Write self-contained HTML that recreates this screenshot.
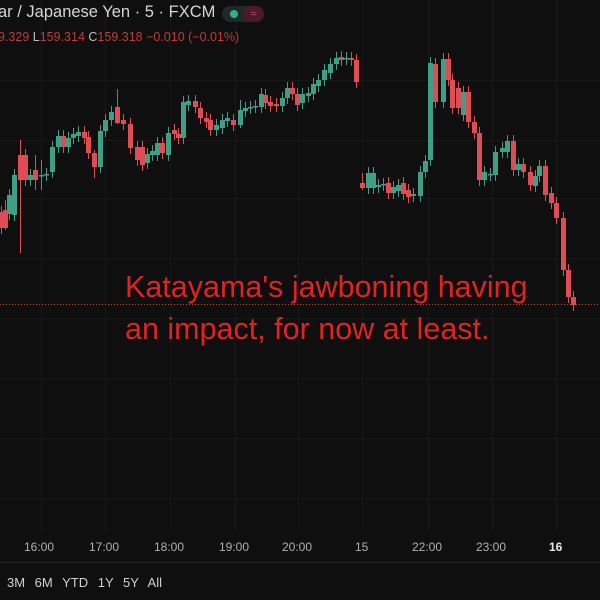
<!DOCTYPE html>
<html><head><meta charset="utf-8"><style>
html,body{margin:0;padding:0;background:#0f0f0f;width:600px;height:600px;overflow:hidden;font-family:"Liberation Sans",sans-serif}
.t{position:absolute;white-space:nowrap}
</style></head><body>
<svg id="c" width="600" height="600" style="position:absolute;left:0;top:0">
<g stroke="#181818" stroke-width="1">
<line x1="0" y1="80.5" x2="600" y2="80.5"/><line x1="0" y1="140.5" x2="600" y2="140.5"/><line x1="0" y1="198.5" x2="600" y2="198.5"/><line x1="0" y1="258.5" x2="600" y2="258.5"/><line x1="0" y1="318.5" x2="600" y2="318.5"/><line x1="0" y1="378.5" x2="600" y2="378.5"/><line x1="0" y1="438.5" x2="600" y2="438.5"/><line x1="0" y1="498.5" x2="600" y2="498.5"/>
<line x1="41.5" y1="0" x2="41.5" y2="530"/><line x1="105.5" y1="0" x2="105.5" y2="530"/><line x1="170.5" y1="0" x2="170.5" y2="530"/><line x1="235.5" y1="0" x2="235.5" y2="530"/><line x1="298.5" y1="0" x2="298.5" y2="530"/><line x1="362.5" y1="0" x2="362.5" y2="530"/><line x1="428.5" y1="0" x2="428.5" y2="530"/><line x1="492.5" y1="0" x2="492.5" y2="530"/><line x1="556.5" y1="0" x2="556.5" y2="530"/>
</g>
<line x1="0" y1="562.5" x2="600" y2="562.5" stroke="#262626"/>
<line x1="0" y1="304.5" x2="600" y2="304.5" stroke="#c05030" stroke-dasharray="1,2"/>
<g id="k"></g>
</svg>
<script>
var d=[[1,212,228],[5,210,228,200,230],[9,214,195],[14,215,175],[20,155,180,140,253],[25,155,180],[30,180,175],[35,170,180,155,190],[41,176,175,160,190],[46,175,174],[52,172,147],[58,147,136],[63,136,147],[68,147,138],[73,138,134],[78,136,132],[84,132,138],[88,137,153],[94,153,167,150,178],[100,167,131],[105,131,120],[111,120,112],[117,107,123,89,124],[123,120,124],[130,124,148],[137,147,160],[142,147,165],[147,163,154],[152,155,151],[157,155,143],[162,143,153],[168,155,133],[174,130,134],[178,134,138],[183,138,102],[188,105,101],[195,101,107],[200,108,118],[206,118,122],[210,120,130],[216,130,125],[222,128,120],[227,121,118],[233,120,125],[240,125,110,100,128],[245,111,108],[250,108,107],[255,107,106],[261,107,94],[265,95,103],[270,102,106],[276,104,106],[282,106,98],[287,98,88],[292,88,94],[297,94,105],[302,103,94],[308,96,93],[313,94,84],[318,86,80],[324,80,70],[330,73,64],[336,64,58],[341,57,60],[346,59,58],[351,58,60],[356,60,82],
[362,183,188,173,190],[368,188,173],[373,188,173],[378,187,185],[383,185,184],[388,183,193],[393,193,187],[398,191,185],[403,183,194],[408,190,197],[413,196,194],[420,196,172],[425,172,161],[430,160,63],[435,64,102],[443,102,59],[448,59,80],[452,80,108],[458,88,108],[463,115,92],[468,92,122],[474,122,133],[479,133,180],[484,180,172],[490,175,174],[495,175,152],[502,152,148],[507,152,141],[513,141,170],[518,170,164],[523,164,172],[530,172,185],[535,186,176],[539,176,166],[545,166,195],[551,193,203],[556,203,218],[563,218,270],[568,270,297],[573,297,305]];
var s='';d.forEach(function(c){var x=c[0],o=c[1],cl=c[2],up=cl<o,col=up?'#3d9f85':'#e04c55';var t=Math.min(o,cl),b=Math.max(o,cl);var h=c[3]||t-6,l=c[4]||b+6;s+='<line x1="'+(x+0.5)+'" x2="'+(x+0.5)+'" y1="'+h+'" y2="'+l+'" stroke="'+col+'"/>';s+='<rect x="'+(x-2)+'" y="'+t+'" width="5" height="'+Math.max(b-t,1.5)+'" fill="'+col+'"/>';});
document.getElementById('k').innerHTML=s;
</script>
<div class="t" style="left:-2px;top:3px;font-size:16.5px;color:#d6d6d6">ar / Japanese Yen · 5 · FXCM</div>
<div class="t" style="left:222px;top:6px;width:42px;height:16px;border-radius:8px;background:#1f2a28"></div>
<div class="t" style="left:230px;top:10px;width:8px;height:8px;border-radius:4px;background:#2bb48b"></div>
<div class="t" style="left:243px;top:6px;width:21px;height:16px;border-radius:8px;background:#4a1a2a;color:#e0407a;font-size:11px;text-align:center;line-height:16px">≈</div>
<div class="t" style="left:-2px;top:30px;font-size:12.5px;color:#c0393f">9.329 <span style="color:#bbb">L</span>159.314 <span style="color:#bbb">C</span>159.318 −0.010 (−0.01%)</div>
<div class="t" style="left:125px;top:266px;font-size:30.5px;color:#e02222;line-height:42px">Katayama's jawboning having<br>an impact, for now at least.</div>
<div class="t" style="top:540px;left:0;font-size:12px;color:#b0b0b0">
<span class="t" style="left:24px">16:00</span><span class="t" style="left:89px">17:00</span><span class="t" style="left:154px">18:00</span><span class="t" style="left:219px">19:00</span><span class="t" style="left:282px">20:00</span><span class="t" style="left:355px">15</span><span class="t" style="left:412px">22:00</span><span class="t" style="left:476px">23:00</span><span class="t" style="left:549px;color:#e8e8e8;font-weight:bold">16</span></div>
<div class="t" style="left:7px;top:575px;font-size:13px;color:#d0d0d0;word-spacing:6px">3M 6M YTD 1Y 5Y All</div>
</body></html>
